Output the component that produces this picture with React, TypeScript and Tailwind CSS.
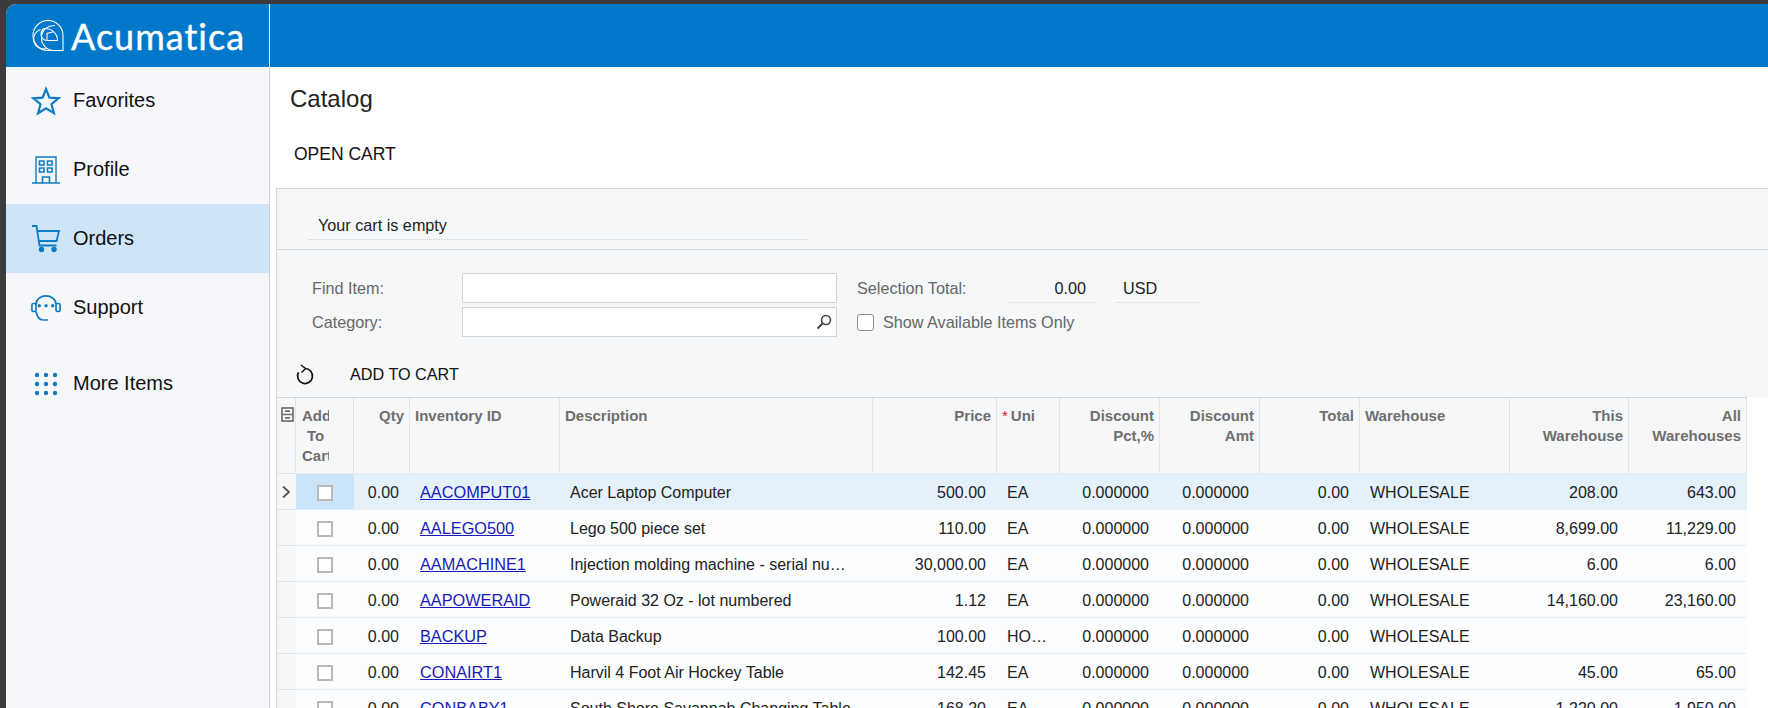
import React from 'react';

const rows = [
  { id: 'AACOMPUT01', desc: 'Acer Laptop Computer', price: '500.00', uom: 'EA', here: '208.00', all: '643.00' },
  { id: 'AALEGO500', desc: 'Lego 500 piece set', price: '110.00', uom: 'EA', here: '8,699.00', all: '11,229.00' },
  { id: 'AAMACHINE1', desc: 'Injection molding machine - serial number', price: '30,000.00', uom: 'EA', here: '6.00', all: '6.00' },
  { id: 'AAPOWERAID', desc: 'Poweraid 32 Oz - lot numbered', price: '1.12', uom: 'EA', here: '14,160.00', all: '23,160.00' },
  { id: 'BACKUP', desc: 'Data Backup', price: '100.00', uom: 'HOUR', here: '', all: '' },
  { id: 'CONAIRT1', desc: 'Harvil 4 Foot Air Hockey Table', price: '142.45', uom: 'EA', here: '45.00', all: '65.00' },
  { id: 'CONBABY1', desc: 'South Shore Savannah Changing Table', price: '168.20', uom: 'EA', here: '1,220.00', all: '1,950.00' },
];

const StarIcon = () => (
  <svg width="30" height="30" viewBox="0 0 30 30" fill="none" stroke="#0f7cc4" strokeWidth="2.2" strokeLinejoin="miter">
    <path d="M15 3l3.4 8.6 9.3.6-7.2 5.9 2.4 9.1L15 22.3l-7.9 5 2.4-9.1-7.2-5.9 9.3-.6z" />
  </svg>
);

const BuildingIcon = () => (
  <svg width="30" height="30" viewBox="0 0 30 30" fill="none" stroke="#0f7cc4" strokeWidth="1.4">
    <path d="M5 28V2h20v26M1 28h28" />
    <path d="M8.5 6h4.5v4H8.500zM16.500 6H21v4h-4.500zM8.500 13H13v4H8.500zM16.500 13H21v4h-4.500zM11.500 28v-6h7v6" strokeWidth="1.6" />
  </svg>
);

const CartIcon = () => (
  <svg width="30" height="30" viewBox="0 0 30 30" fill="none" stroke="#0f7cc4" strokeWidth="1.8">
    <path d="M1 2h4.500l3 19.500h17" />
    <path d="M6.500 7H28l-2.500 10H8" />
    <circle cx="10.500" cy="25.500" r="1.800" fill="#0f7cc4" />
    <circle cx="23" cy="25.500" r="1.800" fill="#0f7cc4" />
  </svg>
);

const HeadsetIcon = () => (
  <svg width="30" height="26" viewBox="0 0 30 26" fill="none" stroke="#0f7cc4" strokeWidth="1.7">
    <path d="M5 9.500C5 4 10 .9 15 .9S25 4 25 9.500" />
    <rect x=".9" y="8.500" width="4.100" height="8" rx="1.500" />
    <rect x="25" y="8.500" width="4.100" height="8" rx="1.500" />
    <path d="M5 16.500C6 21 8 25 12 25h5" />
    <circle cx="8.300" cy="10.700" r="1.700" fill="#0f7cc4" stroke="none" />
    <circle cx="15" cy="10.700" r="1.700" fill="#0f7cc4" stroke="none" />
    <circle cx="21.700" cy="10.700" r="1.700" fill="#0f7cc4" stroke="none" />
  </svg>
);

const DotsIcon = () => (
  <svg width="24" height="24" viewBox="0 0 24 24" fill="#0f7cc4">
    {[3, 12, 21].map((y) =>
      [3, 12, 21].map((x) => <circle key={`${x}-${y}`} cx={x} cy={y} r="2.200" />)
    )}
  </svg>
);

const LogoMark = () => (
  <svg width="32" height="32" viewBox="0 0 32 32" fill="none" stroke="#fff" strokeWidth="1.100">
    <path d="M31 30.500H16A15 15 0 1 1 31 15.500Z" />
    <path d="M21 30.500A12.500 12.500 0 1 1 23 5.500" />
    <path d="M14.500 28.500A9.500 9.500 0 0 1 8.500 9.500" />
    <path d="M12 8.500C20 8 25.500 14 25.500 20.500H15C11.500 20.500 9 17.500 9 14.500C9 12 10 10 12 8.500Z" />
    <path d="M15 20.500V13.500L21.500 11.800" />
  </svg>
);

const navItems = [
  { label: 'Favorites', icon: <StarIcon />, h: 'h-[68px]', active: false },
  { label: 'Profile', icon: <BuildingIcon />, h: 'h-[69px]', active: false },
  { label: 'Orders', icon: <CartIcon />, h: 'h-[69px]', active: true },
  { label: 'Support', icon: <HeadsetIcon />, h: 'h-[69px]', active: false },
  { label: 'More Items', icon: <DotsIcon />, h: 'h-[84px]', active: false },
];

const Sidebar = () => (
  <aside className="w-[264px] shrink-0 border-r border-[#cfd3d7] bg-[#f5f7fa]">
    {navItems.map((item) => (
      <div key={item.label} className={`flex items-center ${item.h} ${item.active ? 'bg-[#cde5f7]' : ''}`}>
        <div className="flex w-[67px] shrink-0 justify-center pl-[13px] pr-[1px]">{item.icon}</div>
        <span className="pb-[2px] text-[20px] text-[#111]">{item.label}</span>
      </div>
    ))}
  </aside>
);

const headCell = 'border-r border-[#e1e4e7] px-[5px] pt-[8px] align-top text-[15px] font-bold leading-[20px] text-[#6f6f6f]';
const cell = 'overflow-hidden truncate pl-[10px] pr-[11px] pt-[2px] text-[16px] text-[#222]';

const CatalogTable = () => (
  <table className="w-[1470px] table-fixed border-separate border-spacing-0 border-t border-[#d3d6d9]">
    <colgroup>
      <col className="w-[19px]" />
      <col className="w-[58px]" />
      <col className="w-[56px]" />
      <col className="w-[150px]" />
      <col className="w-[313px]" />
      <col className="w-[124px]" />
      <col className="w-[63px]" />
      <col className="w-[100px]" />
      <col className="w-[100px]" />
      <col className="w-[100px]" />
      <col className="w-[150px]" />
      <col className="w-[119px]" />
      <col className="w-[118px]" />
    </colgroup>
    <thead>
      <tr className="h-[75px] bg-[#f5f7f9]">
        <th className="border-r border-[#e1e4e7] pt-[9px] align-top">
          <svg className="ml-[4px]" width="13" height="15" viewBox="0 0 13 15" fill="none" stroke="#6f6f6f" strokeWidth="1.700">
            <rect x="1" y="1" width="11" height="13" />
            <path d="M1 7.500h11M4 4.200h5M4 10.800h5" />
          </svg>
        </th>
        <th className={`${headCell} !pl-[6px]`}>
          <div className="w-[27px] overflow-hidden text-center">Add To Cart</div>
        </th>
        <th className={`${headCell} text-right`}>Qty</th>
        <th className={`${headCell} text-left`}>Inventory ID</th>
        <th className={`${headCell} text-left`}>Description</th>
        <th className={`${headCell} text-right`}>Price</th>
        <th className={`${headCell} text-left`}>
          <span className="mr-[3px] font-normal text-[#e0192d]">*</span>Uni
        </th>
        <th className={`${headCell} text-right`}>Discount Pct,%</th>
        <th className={`${headCell} text-right`}>Discount Amt</th>
        <th className={`${headCell} text-right`}>Total</th>
        <th className={`${headCell} text-left`}>Warehouse</th>
        <th className={`${headCell} text-right`}>This Warehouse</th>
        <th className={`${headCell} text-right`}>All Warehouses</th>
      </tr>
    </thead>
    <tbody>
      {rows.map((r, i) => {
        const on = i === 0;
        const base = `h-[36px] border-t border-[#e3edf3] ${on ? 'bg-[#e4f1fb]' : 'bg-[#fbfdfe]'}`;
        return (
          <tr key={r.id}>
            <td className="h-[36px] border-t border-[#e1e4e7] bg-[#f5f7f9] pt-[1px] text-center align-middle">
              {on && (
                <svg className="ml-[4px]" width="10" height="14" viewBox="0 0 10 14" fill="none" stroke="#555" strokeWidth="1.800">
                  <path d="M2 1.500L8 7l-6 5.500" />
                </svg>
              )}
            </td>
            <td className={`h-[36px] border-t border-[#e3edf3] pt-[2px] align-middle ${on ? 'bg-[#cce4f7]' : 'bg-[#fbfdfe]'}`}>
              <div className="mx-auto h-[16px] w-[16px] border-2 border-[#b9b9b9] bg-white" />
            </td>
            <td className={`${base} ${cell} text-right`}>0.00</td>
            <td className={`${base} ${cell}`}>
              <a href="#" className="text-[16.300px] text-[#1a1ab8] underline">{r.id}</a>
            </td>
            <td className={`${base} ${cell} !pr-[17px]`}>{r.desc}</td>
            <td className={`${base} ${cell} text-right`}>{r.price}</td>
            <td className={`${base} ${cell}`}>{r.uom}</td>
            <td className={`${base} ${cell} text-right`}>0.000000</td>
            <td className={`${base} ${cell} text-right`}>0.000000</td>
            <td className={`${base} ${cell} text-right`}>0.00</td>
            <td className={`${base} ${cell}`}>WHOLESALE</td>
            <td className={`${base} ${cell} text-right`}>{r.here}</td>
            <td className={`${base} ${cell} text-right`}>{r.all}</td>
          </tr>
        );
      })}
    </tbody>
  </table>
);

const App: React.FC = () => {
  return (
    <div className="h-[708px] overflow-hidden bg-[#3b3b3b] pl-[6px] pt-[4px] font-['Liberation_Sans',Arial,sans-serif]">
      <div className="flex h-[704px] flex-col overflow-hidden rounded-tl-[10px] bg-white">
        <header className="flex h-[63px] shrink-0 bg-[#0078c9]">
          <div className="flex w-[264px] items-center border-r border-[#e8f2fa] pl-[26px]">
            <LogoMark />
            <span className="ml-[7px] font-['Lato',sans-serif] text-[36px] leading-none tracking-[1px] text-white [-webkit-text-stroke:0.4px_white]">Acumatica</span>
          </div>
        </header>

        <div className="flex min-h-0 flex-1">
          <Sidebar />

          <main className="min-w-0 flex-1">
            <h1 className="flex h-[64px] items-center pl-[20px] text-[24px] font-normal text-[#222]">Catalog</h1>
            <div className="flex h-[44px] items-center pl-[24px] pt-[2px] text-[17.500px] text-[#111]">OPEN CART</div>

            <section className="ml-[6px] mt-[13px] border-l border-[#d3d6d9]">
              <div className="h-[62px] border-b border-t border-[#d3d6d9] bg-[#f5f7f9] pl-[31px] pt-[26px]">
                <div className="h-[25px] w-[500px] border-b border-dotted border-[#d0d3d6] pl-[10px] text-[16.200px] leading-[20px] text-[#222]">
                  Your cart is empty
                </div>
              </div>

              <div className="bg-[#f5f7f9] pl-[35px] pt-[23px] text-[16.200px] text-[#666]">
                <div className="flex h-[30px] items-center">
                  <label className="w-[150px]">Find Item:</label>
                  <input className="h-[30px] w-[375px] border border-[#cfd3d6] bg-white" />
                  <span className="ml-[20px] w-[151px]">Selection Total:</span>
                  <span className="h-[30px] w-[87px] border-b border-dotted border-[#d0d3d6] pr-[9px] text-right leading-[30px] text-[#222]">0.00</span>
                  <span className="ml-[21px] h-[30px] w-[84px] border-b border-dotted border-[#d0d3d6] pl-[7px] leading-[30px] text-[#222]">USD</span>
                </div>
                <div className="mt-[4px] flex h-[30px] items-center">
                  <label className="w-[150px]">Category:</label>
                  <div className="flex h-[30px] w-[375px] items-center justify-end border border-[#cfd3d6] bg-white pr-[3px]">
                    <svg width="18" height="18" viewBox="0 0 18 18" fill="none" stroke="#444" strokeWidth="1.600">
                      <circle cx="11" cy="7" r="4.500" />
                      <path d="M7.500 10.500L2.500 15.500" strokeWidth="2" />
                    </svg>
                  </div>
                  <div className="ml-[20px] h-[17px] w-[17px] rounded-[3px] border border-[#8c8c8c] bg-white" />
                  <span className="ml-[9px]">Show Available Items Only</span>
                </div>

                <div className="mt-[17px] flex h-[43px] items-center pb-[2px]">
                  <svg className="-ml-[17px]" width="20" height="22" viewBox="0 0 20 22" fill="none" stroke="#111" strokeWidth="1.700">
                    <path d="M10 4.500A7.500 7.500 0 1 1 3.500 8.250" />
                    <path d="M6 1l4.500 3.500-4 4" strokeWidth="1.500" />
                  </svg>
                  <span className="ml-[35px] text-[16.200px] text-[#111]">ADD TO CART</span>
                </div>
              </div>

              <CatalogTable />
            </section>
          </main>
        </div>
      </div>
    </div>
  );
};

export default App;
